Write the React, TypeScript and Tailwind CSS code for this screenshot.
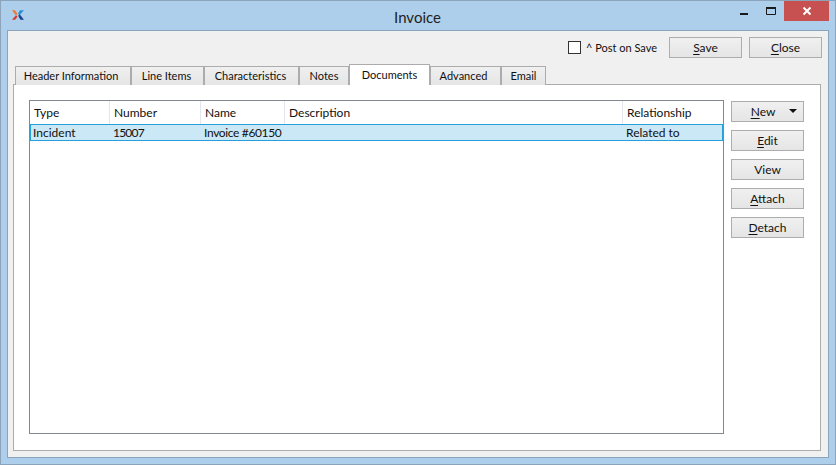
import React from "react";

const font = { fontFamily: '"Lato", "Liberation Sans", sans-serif' };

function U({ c }: { c: string }) {
  return <span className="underline underline-offset-2 decoration-1">{c}</span>;
}

function Btn({ children, extra = "" }: { children: React.ReactNode; extra?: string }) {
  return (
    <div
      className={`relative flex h-[21px] w-[73px] items-center justify-center border border-[#adadad] bg-gradient-to-b from-[#f0f0f0] to-[#e5e5e5] text-[12px] text-[#111] ${extra}`}
    >
      {children}
    </div>
  );
}

const tabs: [string, string][] = [
  ["Header Information", "w-[116px] pr-[4px]"],
  ["Line Items", "w-[73px] pr-[2px]"],
  ["Characteristics", "w-[95px] pr-[2px]"],
  ["Notes", "w-[50px]"],
];
const tabsAfter: [string, string][] = [
  ["Advanced", "w-[71px] pr-[4px]"],
  ["Email", "w-[45px]"],
];

function Tab({ label, w }: { label: string; w: string }) {
  return (
    <div
      className={`flex h-[19px] ${w} items-center justify-center border border-b-0 border-[#acacac] bg-gradient-to-b from-[#f0f0f0] to-[#e5e5e5] pt-px text-[11px] text-[#111]`}
    >
      {label}
    </div>
  );
}

const cols: [string, string, string, string][] = [
  ["Type", "Incident", "w-[80px]", ""],
  ["Number", "15007", "w-[91px]", "tracking-[-0.8px]"],
  ["Name", "Invoice #60150", "w-[84px]", "tracking-[-0.35px]"],
  ["Description", "", "w-[338px]", ""],
  ["Relationship", "Related to", "flex-1", ""],
];

export default function App() {
  return (
    <div
      style={font}
      className="flex h-[465px] w-[836px] flex-col overflow-hidden border border-[#8ba3bb] bg-[#aecfeb] text-[#111]"
    >
      <div className="flex h-[29px] shrink-0 items-start">
        <svg width="12" height="10" viewBox="1 1 12 9.5" className="ml-[11px] mt-[9px]">
          <path d="M1 1h3l2.5 3.5L5 6.5z" fill="#ee7b30" />
          <path d="M1 10.5 5 6l1.5 1.6L4 10.5z" fill="#d8392c" />
          <path d="M9 1h4L8.5 6 7 4.2z" fill="#2b8fd8" />
          <path d="M7.2 6.4 9.4 10.5H13L8.6 4.9z" fill="#1d3f8f" />
        </svg>
        <div className="flex-1 pl-[73px] pt-[6px] text-center text-[15px] leading-[20px] text-[#222]">Invoice</div>
        <svg width="12" height="12" viewBox="0 0 12 12" className="mr-[15px] mt-[7px]">
          <rect x="2" y="5" width="8" height="2" fill="#1a1a1a" />
        </svg>
        <svg width="14" height="12" viewBox="0 0 14 12" className="mr-[5px] mt-[5px]">
          <path d="M1.5 1.5h9v7h-9z" fill="none" stroke="#1a1a1a" />
          <rect x="1" y="1" width="10" height="2" fill="#1a1a1a" />
        </svg>
        <div className="flex h-[20px] w-[45px] items-center justify-center bg-[#c75050]">
          <svg width="10" height="10" viewBox="0 0 10 10">
            <path d="M1.5 1.5l7 7M8.5 1.5l-7 7" stroke="#fff" strokeWidth="2" />
          </svg>
        </div>
        <div className="w-[6px]" />
      </div>

      <div className="mx-[6px] flex h-[428px] flex-col border border-[#8ba3bb] bg-[#f0f0f0] px-[5px]">
        <div className="flex h-[27px] shrink-0 items-start justify-end pr-[1px] pt-[6px]">
          <div className="mt-[4px] h-[13px] w-[13px] border border-[#333] bg-white" />
          <span className="ml-[5px] mr-[12px] mt-[3px] text-[11px] leading-[15px]">^ Post on Save</span>
          <Btn>
            <span><U c="S" />ave</span>
          </Btn>
          <Btn extra="ml-[7px]">
            <span><U c="C" />lose</span>
          </Btn>
        </div>

        <div className="relative z-10 -mb-px mr-[2px] mt-[6px] flex h-[21px] shrink-0 items-end pl-[2px]">
          {tabs.map(([l, w]) => (
            <Tab key={l} label={l} w={w} />
          ))}
          <div className="z-10 flex h-[21px] w-[81px] items-start justify-center border border-b-0 border-[#acacac] bg-white pt-[2px] text-[11px] leading-[15px]">
            Documents
          </div>
          {tabsAfter.map(([l, w]) => (
            <Tab key={l} label={l} w={w} />
          ))}
        </div>

        <div className="mb-[6px] mr-[2px] flex flex-1 gap-[7px] border border-[#acacac] bg-white pb-[16px] pl-[15px] pr-[16px] pt-[15px]">
          <div className="flex flex-1 flex-col border border-[#828790] bg-white">
            <div className="flex h-[23px] shrink-0">
              {cols.map(([h, , w]) => (
                <div key={h} className={`${w} flex items-center whitespace-nowrap border-r border-[#e5e5f0] pl-[4px] text-[12px] last:border-r-0`}>
                  {h}
                </div>
              ))}
            </div>
            <div className="flex h-[17px] shrink-0 border border-[#26a0da] bg-[#cbe8f6]">
              {cols.map(([h, v, w, t], i) => (
                <div key={h} className={`${i === 0 ? "w-[79px] pl-[2px]" : `${w} pl-[3px]`} ${t} flex items-center whitespace-nowrap text-[12px]`}>
                  {v}
                </div>
              ))}
            </div>
          </div>

          <div className="mt-px flex w-[73px] shrink-0 flex-col gap-[8px]">
            <Btn>
              <span className="mr-[9px]"><U c="N" />ew</span>
              <span className="absolute right-[6px] top-[7px] h-0 w-0 border-x-[4px] border-t-[4px] border-x-transparent border-t-[#111]" />
            </Btn>
            <Btn><span><U c="E" />dit</span></Btn>
            <Btn>View</Btn>
            <Btn><span><U c="A" />ttach</span></Btn>
            <Btn><span><U c="D" />etach</span></Btn>
          </div>
        </div>
      </div>
    </div>
  );
}
